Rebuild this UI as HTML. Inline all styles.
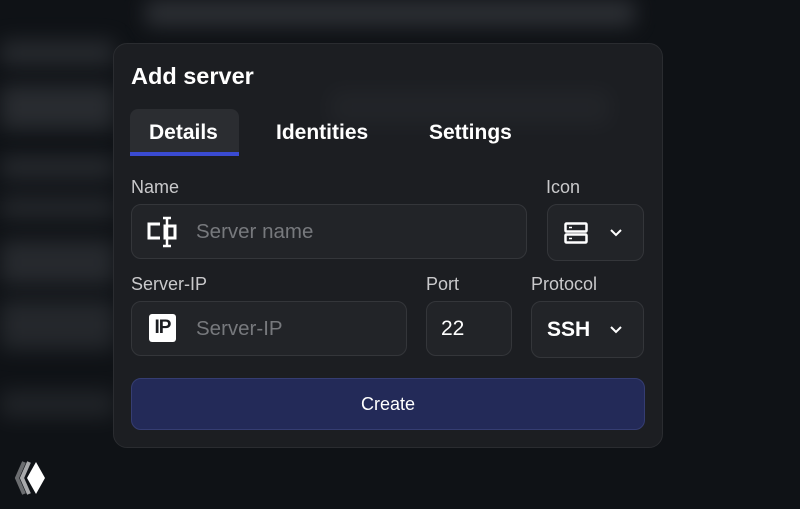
<!DOCTYPE html>
<html><head><meta charset="utf-8"><style>
*{margin:0;padding:0;box-sizing:border-box}
body{width:800px;height:509px;overflow:hidden;background:#0f1216;font-family:"Liberation Sans",sans-serif;position:relative;color:#fff}
.bl{position:absolute;background:#3a3d42;filter:blur(10px);border-radius:6px}
.card{position:absolute;left:113px;top:43px;width:550px;height:405px;background:#1c1e22;border:1px solid #2a2c30;border-radius:14px}
.a{position:absolute}
.lbl{position:absolute;font-size:18px;color:#c9c9cb}
.box{position:absolute;background:#222428;border:1px solid #34363a;border-radius:10px}
.ph{position:absolute;font-size:20.5px;color:#77797d}
.tab{position:absolute;font-size:21px;font-weight:bold;top:121px}
</style></head><body>
<div class="bl" style="left:145px;top:0;width:490px;height:26px;opacity:.7"></div>
<div class="bl" style="left:0;top:40px;width:115px;height:26px;opacity:.55"></div>
<div class="bl" style="left:0;top:85px;width:115px;height:45px;opacity:.6"></div>
<div class="bl" style="left:0;top:155px;width:115px;height:25px;opacity:.5"></div>
<div class="bl" style="left:0;top:195px;width:115px;height:25px;opacity:.45"></div>
<div class="bl" style="left:0;top:240px;width:115px;height:45px;opacity:.55"></div>
<div class="bl" style="left:0;top:300px;width:115px;height:50px;opacity:.5"></div>
<div class="bl" style="left:0;top:390px;width:115px;height:28px;opacity:.4"></div>
<div class="card"></div>
<div class="bl" style="left:330px;top:90px;width:280px;height:35px;opacity:.2"></div>
<div class="a" style="left:131px;top:63px;font-size:23.5px;font-weight:bold">Add server</div>
<div class="a" style="left:130px;top:109px;width:109px;height:47px;background:#2b2d31;border-radius:8px 8px 0 0"></div>
<div class="a" style="left:130px;top:152px;width:109px;height:4px;background:#3a4bd2"></div>
<div class="tab" style="left:149px">Details</div>
<div class="tab" style="left:276px">Identities</div>
<div class="tab" style="left:429px">Settings</div>
<div class="lbl" style="left:131px;top:177px">Name</div>
<div class="lbl" style="left:546px;top:177px">Icon</div>
<div class="box" style="left:131px;top:204px;width:396px;height:55px"></div>
<svg class="a" style="left:146px;top:216px" width="34" height="32" viewBox="0 0 34 32"><path d="M14 8H3v14h11" fill="none" stroke="#fff" stroke-width="3"/><path d="M21 2v28M17 2h8M17 30h8" stroke="#fff" stroke-width="2.5" fill="none"/><rect x="19" y="10" width="10" height="12" fill="none" stroke="#fff" stroke-width="3"/></svg>
<div class="ph" style="left:196px;top:220px">Server name</div>
<div class="box" style="left:547px;top:204px;width:97px;height:57px"></div>
<svg class="a" style="left:564px;top:222px" width="24" height="22" viewBox="0 0 24 22"><rect x="1.5" y="1.5" width="21" height="8" rx="1" fill="none" stroke="#fff" stroke-width="2.5"/><rect x="1.5" y="12.5" width="21" height="8" rx="1" fill="none" stroke="#fff" stroke-width="2.5"/><path d="M5 5.5h3M5 16.5h3" stroke="#fff" stroke-width="1.5"/></svg>
<svg class="a" style="left:609px;top:228px" width="14" height="10" viewBox="0 0 14 10"><path d="M2 2l5 5 5-5" fill="none" stroke="#fff" stroke-width="2"/></svg>
<div class="lbl" style="left:131px;top:274px">Server-IP</div>
<div class="lbl" style="left:426px;top:274px">Port</div>
<div class="lbl" style="left:531px;top:274px">Protocol</div>
<div class="box" style="left:131px;top:301px;width:276px;height:55px"></div>
<div class="a" style="left:149px;top:314px;width:27px;height:28px;background:#fff;border-radius:3px;color:#1b1d21;font-weight:bold;font-size:19px;text-align:center;line-height:28px;letter-spacing:-1px">IP</div>
<div class="ph" style="left:196px;top:317px">Server-IP</div>
<div class="box" style="left:426px;top:301px;width:86px;height:55px"></div>
<div class="a" style="left:441px;top:317px;font-size:21px">22</div>
<div class="box" style="left:531px;top:301px;width:113px;height:57px"></div>
<div class="a" style="left:547px;top:318px;font-size:21px;font-weight:bold">SSH</div>
<svg class="a" style="left:609px;top:325px" width="14" height="10" viewBox="0 0 14 10"><path d="M2 2l5 5 5-5" fill="none" stroke="#fff" stroke-width="2"/></svg>
<div class="a" style="left:131px;top:378px;width:514px;height:52px;background:#232a58;border:1px solid #353d72;border-radius:10px;text-align:center;line-height:50px;font-size:18px">Create</div>
<svg class="a" style="left:14px;top:459px" width="34" height="38" viewBox="0 0 34 38"><path d="M10 3L3 19l7 16" fill="none" stroke="#6b6d70" stroke-width="4"/><path d="M15 3L8 19l7 16" fill="none" stroke="#a8a9ab" stroke-width="4"/><path d="M22 3l9 16-9 16-9-16z" fill="#fff"/></svg>
</body></html>
